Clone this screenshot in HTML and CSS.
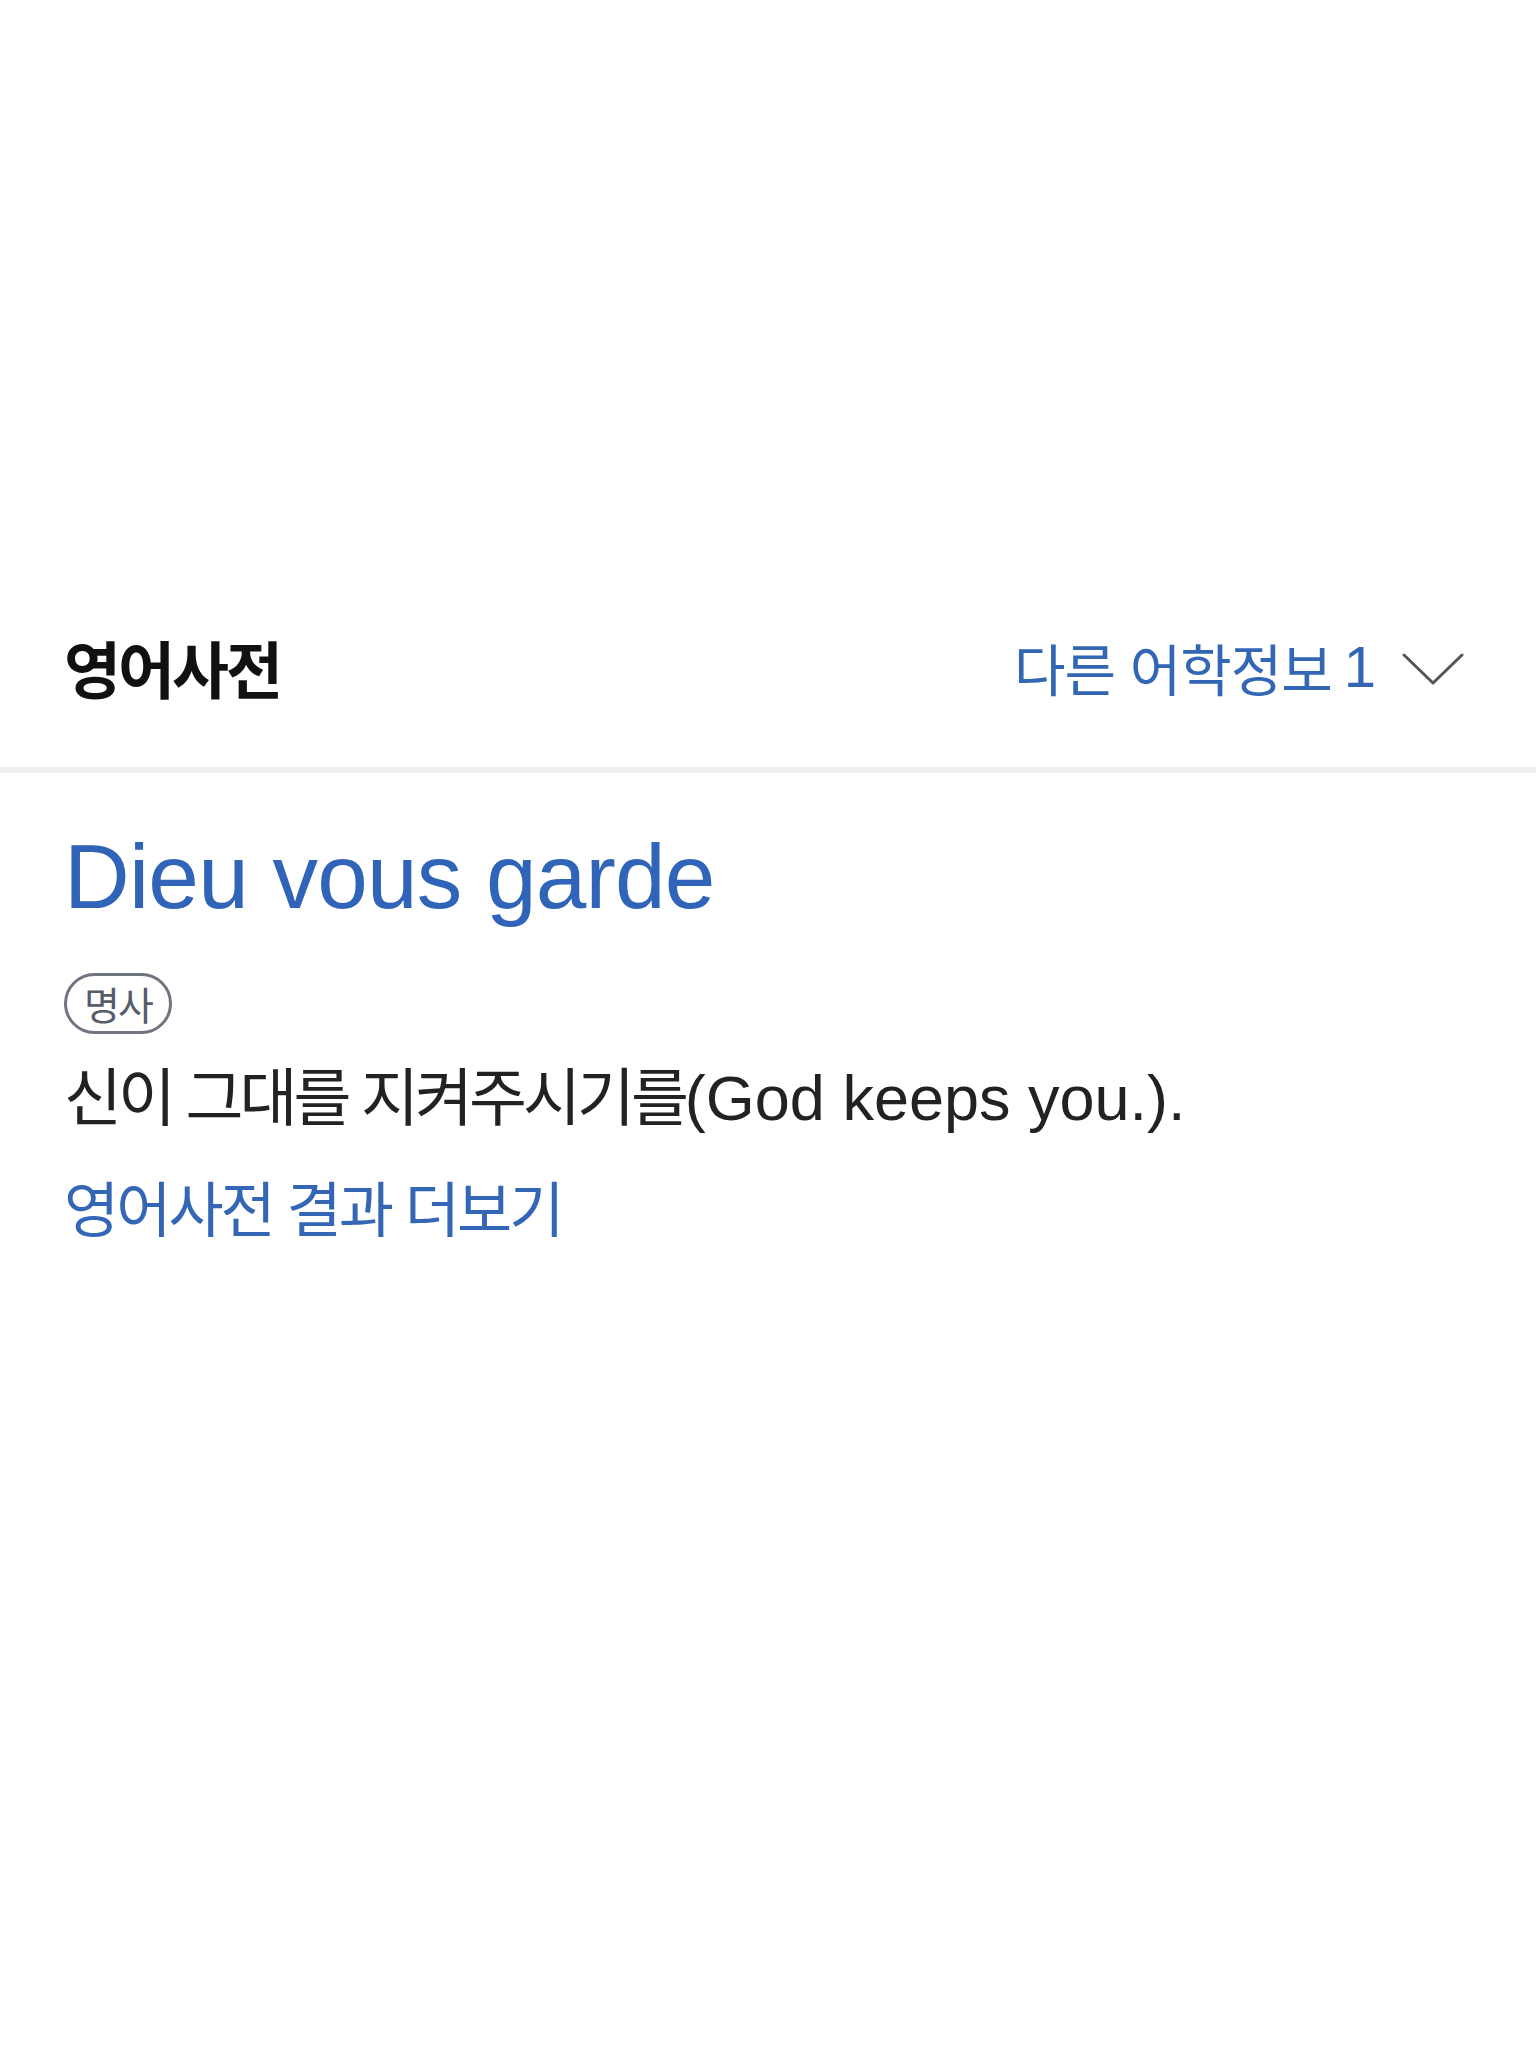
FILE: index.html
```html
<!DOCTYPE html>
<html lang="ko">
<head>
<meta charset="utf-8">
<title>영어사전</title>
<link rel="stylesheet" href="styles.css">
</head>
<body>
<main class="page">
  <header class="dict-header">
    <h2 class="dict-title">영어사전</h2>
    <a class="other-info" href="#">
      <span class="other-label">다른 어학정보</span>
      <span class="other-count">1</span>
      <svg class="chevron" viewBox="0 0 62 32" width="62" height="32" aria-hidden="true">
        <polyline points="2,2 31,30 60,2" fill="none" stroke="#555" stroke-width="3" stroke-linecap="round" stroke-linejoin="round"/>
      </svg>
    </a>
  </header>
  <section class="entry">
    <h1 class="entry-word">Dieu vous garde</h1>
    <span class="pos-tag">명사</span>
    <p class="entry-def"><span class="ko">신이 그대를 지켜주시기를</span>(God keeps you.).</p>
    <a class="more-link" href="#">영어사전 결과 더보기</a>
  </section>
</main>
</body>
</html>
```

FILE: styles.css
```css
html, body {
  margin: 0;
  padding: 0;
  background: #ffffff;
}

body {
  font-family: "Liberation Sans", "Noto Sans CJK KR", sans-serif;
  color: #1e1e1e;
}

.page {
  width: 1536px;
  padding-top: 590px;
}

.dict-header {
  display: flex;
  align-items: center;
  justify-content: space-between;
  height: 183px;
  padding: 0 72px 24px 64px;
  border-bottom: 6px solid #efefef;
  box-sizing: border-box;
}

.dict-title {
  margin: 0;
  font-family: "Noto Sans CJK KR", sans-serif;
  font-weight: 700;
  font-size: 62px;
  letter-spacing: -3px;
  line-height: 1;
  color: #111111;
}

.other-info {
  display: flex;
  align-items: center;
  text-decoration: none;
  color: #3366b4;
}

.other-label {
  font-family: "Noto Sans CJK KR", sans-serif;
  font-size: 56px;
  font-weight: 400;
  letter-spacing: -1px;
  line-height: 1;
}

.other-count {
  font-family: "Liberation Sans", sans-serif;
  font-size: 58px;
  line-height: 1;
  margin-left: 12px;
}

.chevron {
  display: block;
  margin-left: 26px;
  margin-top: 4px;
}

.entry {
  display: flex;
  flex-direction: column;
  align-items: flex-start;
  padding: 54px 64px 0 64px;
}

.entry-word {
  margin: 0;
  font-family: "Liberation Sans", sans-serif;
  font-weight: 400;
  font-size: 91px;
  line-height: 100px;
  color: #2f64b8;
  letter-spacing: -0.8px;
}

.pos-tag {
  display: inline-flex;
  align-items: center;
  justify-content: center;
  box-sizing: border-box;
  height: 61px;
  margin-top: 46px;
  padding: 0 17px;
  border: 3px solid #6f7480;
  border-radius: 31px;
  font-family: "Noto Sans CJK KR", sans-serif;
  font-size: 39px;
  letter-spacing: -2px;
  color: #565c68;
  line-height: 1;
}

.entry-def {
  margin: 19px 0 0 0;
  font-size: 63px;
  line-height: 80px;
  color: #222222;
}

.entry-def .ko {
  font-family: "Noto Sans CJK KR", sans-serif;
  letter-spacing: -4px;
}

.more-link {
  margin-top: 28px;
  font-family: "Noto Sans CJK KR", sans-serif;
  font-size: 60px;
  line-height: 80px;
  letter-spacing: -3px;
  color: #3366b4;
  text-decoration: none;
}
```
